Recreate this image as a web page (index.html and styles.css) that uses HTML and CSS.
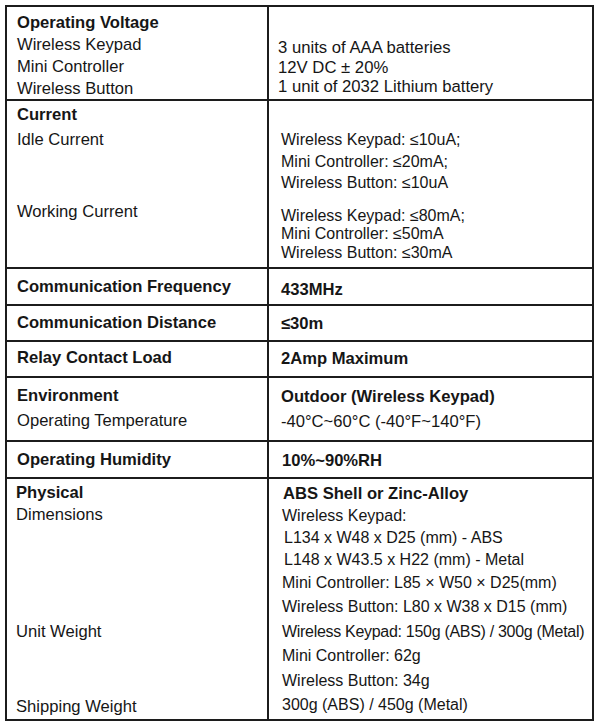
FILE: index.html
```html
<!DOCTYPE html>
<html>
<head>
<meta charset="utf-8">
<link rel="stylesheet" href="styles.css">
</head>
<body>
<div class="spec">
  <div class="cell l r1">
    <div class="b ln22">Operating Voltage</div>
    <div class="ln22">Wireless Keypad</div>
    <div class="ln22">Mini Controller</div>
    <div class="ln22">Wireless Button</div>
  </div>
  <div class="cell r r1">
    <div class="ln195">3 units of AAA batteries</div>
    <div class="ln195">12V DC ± 20%</div>
    <div class="ln195">1 unit of 2032 Lithium battery</div>
  </div>

  <div class="cell l r2">
    <div class="b ln24">Current</div>
    <div class="ln22 idle">Idle Current</div>
    <div class="ln22 work">Working Current</div>
  </div>
  <div class="cell r r2">
    <div class="grp1">
      <div>Wireless Keypad: ≤10uA;</div>
      <div>Mini Controller: ≤20mA;</div>
      <div>Wireless Button: ≤10uA</div>
    </div>
    <div class="grp2">
      <div>Wireless Keypad: ≤80mA;</div>
      <div>Mini Controller: ≤50mA</div>
      <div>Wireless Button: ≤30mA</div>
    </div>
  </div>

  <div class="cell l r3"><div class="b ln20">Communication Frequency</div></div>
  <div class="cell r r3"><div class="b ln20">433MHz</div></div>

  <div class="cell l r4"><div class="b ln20">Communication Distance</div></div>
  <div class="cell r r4"><div class="b ln20">≤30m</div></div>

  <div class="cell l r5"><div class="b ln20">Relay Contact Load</div></div>
  <div class="cell r r5"><div class="b ln20">2Amp Maximum</div></div>

  <div class="cell l r6">
    <div class="b ln22">Environment</div>
    <div class="ln22 gap3">Operating Temperature</div>
  </div>
  <div class="cell r r6">
    <div class="b ln22">Outdoor (Wireless Keypad)</div>
    <div class="ln22 gap3">-40°C~60°C (-40°F~140°F)</div>
  </div>

  <div class="cell l r7"><div class="b ln20">Operating Humidity</div></div>
  <div class="cell r r7"><div class="b ln20">10%~90%RH</div></div>

  <div class="cell l r8">
    <div class="b ln22">Physical</div>
    <div class="ln22">Dimensions</div>
    <div class="ln22 unit">Unit Weight</div>
    <div class="ln22 ship">Shipping Weight</div>
  </div>
  <div class="cell r r8">
    <div class="b ln22 abs">ABS Shell or Zinc-Alloy</div>
    <div class="ln22 sm">Wireless Keypad:</div>
    <div class="ln22 sm ind">L134 x W48 x D25 (mm) - ABS</div>
    <div class="ln22 sm ind">L148 x W43.5 x H22 (mm) - Metal</div>
    <div class="ln244 sm">Mini Controller: L85 × W50 × D25(mm)</div>
    <div class="ln244 sm">Wireless Button: L80 x W38 x D15 (mm)</div>
    <div class="ln244 sm tight">Wireless Keypad: 150g (ABS) / 300g (Metal)</div>
    <div class="ln244 sm">Mini Controller: 62g</div>
    <div class="ln244 sm">Wireless Button: 34g</div>
    <div class="ln244 sm">300g (ABS) / 450g (Metal)</div>
  </div>
</div>
</body>
</html>
```

FILE: styles.css
```css
* { box-sizing: border-box; }

html, body {
  margin: 0;
  padding: 0;
  background: #ffffff;
}

body {
  font-family: "Liberation Sans", Arial, sans-serif;
  font-size: 16.6px;
  color: #161616;
}

.spec {
  margin: 5px 0 0 5px;
  width: 589px;
  display: grid;
  grid-template-columns: 262px 325px;
  grid-template-rows: 94px 168px 37px 36px 36px 64px 37px 242px;
  border-top: 2px solid #1c1c1c;
  border-left: 2px solid #1c1c1c;
}

.cell {
  border-right: 2px solid #1c1c1c;
  border-bottom: 2px solid #1c1c1c;
  white-space: nowrap;
  overflow: hidden;
}

.l { padding-left: 10px; }
.r { padding-left: 10px; }

.b { font-weight: bold; }

.ln20 { line-height: 20px; }
.ln22 { line-height: 22px; }
.ln24 { line-height: 24px; }
.ln195 { line-height: 19.5px; }
.ln244 { line-height: 24.4px; }

/* row 1 */
.l.r1 { padding-top: 5px; }
.r.r1 { padding-top: 31px; padding-left: 9px; font-size: 16.7px; }

/* row 2 */
.l.r2 { padding-top: 2px; }
.idle { margin-top: 2px; }
.work { margin-top: 50px; }
.r.r2 { padding-top: 28px; padding-left: 12px; font-size: 16px; }
.grp1 { line-height: 21.7px; }
.grp2 { line-height: 18.7px; margin-top: 12.5px; }

/* single rows */
.l.r3 { padding-top: 8px; }
.r.r3 { padding-top: 11px; padding-left: 12px; }
.l.r4 { padding-top: 7px; }
.r.r4 { padding-top: 8px; padding-left: 12px; }
.l.r5 { padding-top: 6px; }
.r.r5 { padding-top: 7px; padding-left: 12px; }

/* environment */
.l.r6 { padding-top: 7px; }
.r.r6 { padding-top: 8px; padding-left: 12px; }
.gap3 { margin-top: 3px; }

.l.r7 { padding-top: 8px; }
.r.r7 { padding-top: 9px; padding-left: 13px; }

/* physical */
.l.r8 { padding-top: 3px; padding-left: 9px; }
.unit { margin-top: 95px; }
.ship { margin-top: 53px; }
.r.r8 { padding-top: 4px; padding-left: 14px; }
.sm { font-size: 16px; margin-left: -1px; }
.ind { margin-left: 1px; }
.tight { letter-spacing: -0.3px; }
```
